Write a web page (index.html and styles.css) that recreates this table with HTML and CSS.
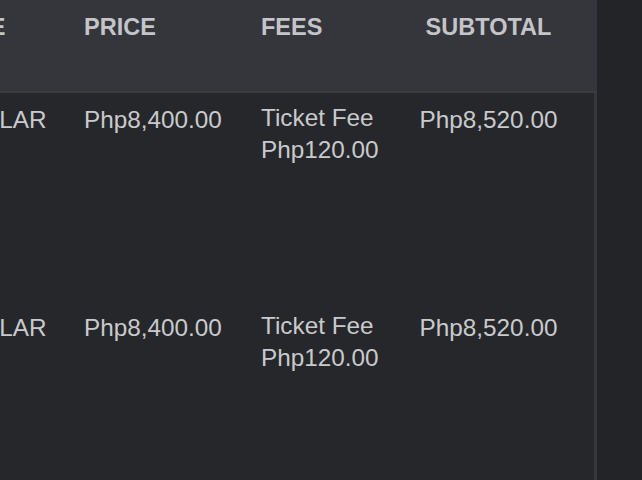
FILE: index.html
```html
<!DOCTYPE html>
<html>
<head>
<meta charset="utf-8">
<link rel="stylesheet" href="styles.css">
</head>
<body>
<div class="page">
  <div class="table">
    <div class="row head">
      <div class="cell c1">TYPE</div>
      <div class="cell">PRICE</div>
      <div class="cell">FEES</div>
      <div class="cell center">SUBTOTAL</div>
    </div>
    <div class="rows">
      <div class="row item">
        <div class="cell c1 amount">REGULAR</div>
        <div class="cell amount">Php8,400.00</div>
        <div class="cell fee">Ticket Fee<br>Php120.00</div>
        <div class="cell center amount">Php8,520.00</div>
      </div>
      <div class="row item">
        <div class="cell c1 amount">REGULAR</div>
        <div class="cell amount">Php8,400.00</div>
        <div class="cell fee">Ticket Fee<br>Php120.00</div>
        <div class="cell center amount">Php8,520.00</div>
      </div>
      <div class="row filler"></div>
    </div>
  </div>
  <div class="side"></div>
</div>
</body>
</html>
```
FILE: styles.css
```css
html, body {
  margin: 0;
  padding: 0;
  background: #232428;
  overflow: hidden;
}
.page {
  display: flex;
  width: 642px;
  height: 480px;
  overflow: hidden;
  font-family: "Liberation Sans", Arial, sans-serif;
}
.table {
  flex: none;
  width: 680px;
  margin-left: -83px;
  display: flex;
  flex-direction: column;
}
.row {
  flex: none;
  display: grid;
  grid-template-columns: 149px 177px 157px 177px 20px;
}
.head {
  height: 93px;
  box-sizing: border-box;
  padding-top: 13px;
  background: #35363b;
  border-bottom: 2px solid #3b3c40;
  color: #c4c5c9;
  font-weight: bold;
  font-size: 23.5px;
  line-height: 28px;
}
.rows {
  flex: 1;
  min-height: 0;
  display: flex;
  flex-direction: column;
  background: #26272b;
  border-right: 4px solid #36373b;
  margin-right: -1px;
}
.item {
  height: 208px;
  box-sizing: border-box;
  padding-top: 9px;
  color: #c9cacd;
  font-size: 24.3px;
  line-height: 32px;
}
.filler {
  flex: 1;
}
.cell {
  padding-left: 18px;
  white-space: nowrap;
}
.amount {
  padding-top: 2px;
}
.head .c1 {
  padding-left: 27px;
}
.item .c1 {
  padding-left: 12px;
}
.center {
  padding-left: 0;
  text-align: center;
}
.side {
  flex: 1;
  background: #232428;
}
```
